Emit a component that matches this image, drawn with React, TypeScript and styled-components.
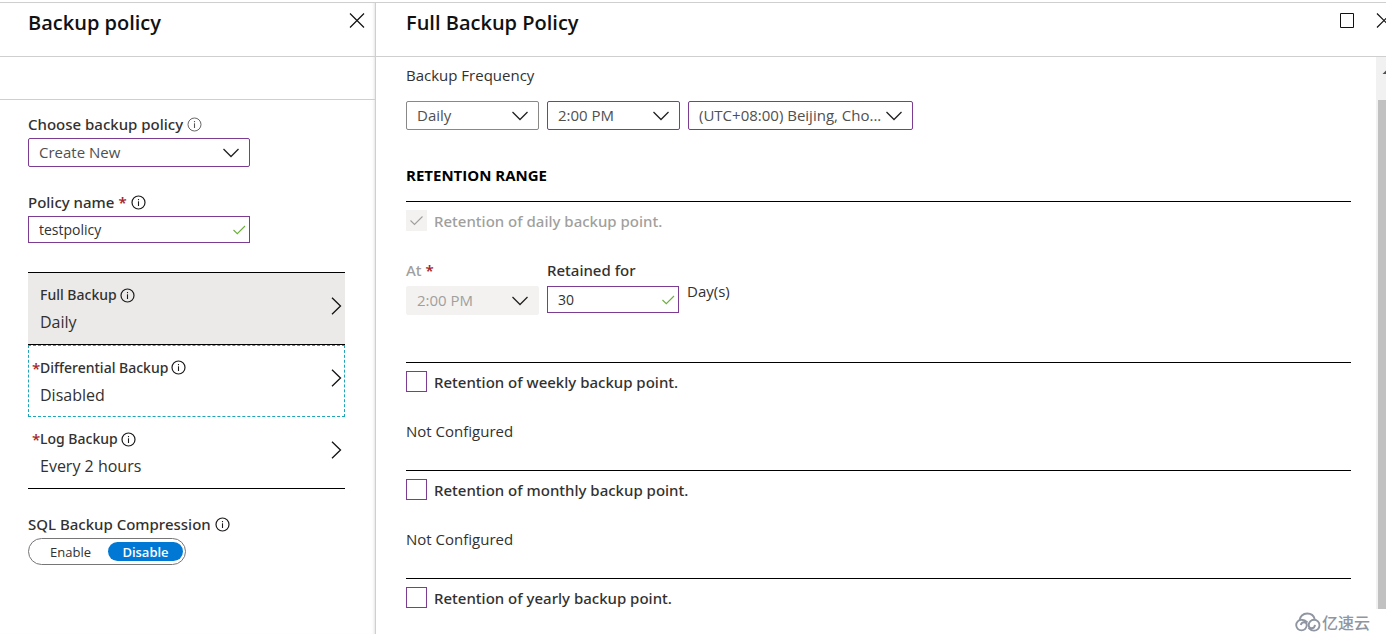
import React, { useId, useState } from 'react';
import styled, { createGlobalStyle, css } from 'styled-components';

const purple = '#7b3c92';
const grey = '#cfcfcf';
const labelFont = "'Noto Sans', 'Open Sans', sans-serif";

const GlobalStyle = createGlobalStyle`
  *, *::before, *::after { box-sizing: border-box; }
  body {
    margin: 0;
    background: #fff;
    color: #323130;
    font-family: 'Open Sans', 'Noto Sans', 'Noto Sans CJK SC', sans-serif;
    font-size: 15px;
    line-height: 20px;
  }
  button, input, select { font: inherit; color: inherit; margin: 0; }
`;

const Page = styled.div`
  position: relative;
  display: flex;
  height: 100vh;
  padding-top: 2px;
  overflow: hidden;
`;

const Blade = styled.section<{ $side?: boolean }>`
  display: flex;
  flex-direction: column;
  min-width: 0;
  border-top: 1px solid ${grey};
  ${({ $side }) =>
    $side
      ? css`
          flex: 0 0 376px;
          border-right: 1px solid ${grey};
          box-shadow: inset -3px 0 3px -2px #e4e4e4;
        `
      : css`
          flex: 1;
        `}
`;

const Header = styled.header<{ $wide?: boolean }>`
  display: flex;
  flex: none;
  justify-content: space-between;
  align-items: flex-start;
  height: 54px;
  padding: ${({ $wide }) => ($wide ? '6px 0 0 30px' : '6px 10px 0 28px')};
  border-bottom: 1px solid ${grey};
  overflow: hidden;
`;

const Title = styled.h1`
  margin: 0;
  color: #111;
  font-size: 20px;
  font-weight: 600;
  line-height: 28px;
`;

const WindowButtons = styled.div`
  display: flex;
  gap: 21px;
  margin-right: -6px;
`;

const IconButton = styled.button`
  display: flex;
  padding: 4px 0;
  border: 0;
  background: none;
`;

const CommandBar = styled.div`
  flex: none;
  height: 43px;
  border-bottom: 1px solid ${grey};
`;

const SideBody = styled.div`
  padding: 14px 30px 0 28px;
`;

const Field = styled.div`
  width: 222px;
  margin-bottom: 25px;
`;

const LabelRow = styled.div`
  display: flex;
  align-items: center;
  gap: 4px;
  height: 20px;
  margin-bottom: 4px;
  font-family: ${labelFont};
  font-weight: 500;
`;

const Star = styled.span`
  color: #a4262c;
  font-weight: 600;
`;

const ControlBox = styled.div<{ $width?: number }>`
  display: grid;
  align-items: center;
  width: ${({ $width }) => ($width ? `${$width}px` : '100%')};
  > * { grid-area: 1 / 1; }
  > svg {
    justify-self: end;
    pointer-events: none;
  }
`;

const SelectInput = styled.select<{ $plain?: boolean }>`
  width: 100%;
  height: 29px;
  padding: 0 30px 1px 10px;
  border: 1px solid ${({ $plain }) => ($plain ? '#8a8886' : purple)};
  border-radius: 2px;
  background: #fff;
  color: #505050;
  appearance: none;
  &:disabled {
    border-color: #f3f2f1;
    background: #f3f2f1;
    color: #a19f9d;
    opacity: 1;
  }
`;

const TextInput = styled.input`
  width: 100%;
  height: 27px;
  padding: 0 28px 1px 10px;
  border: 1px solid ${purple};
  border-radius: 0;
  background: #fff;
  font-size: 14px;
`;

const PolicyList = styled.div`
  display: flex;
  flex-direction: column;
  margin-top: 29px;
  border-top: 1px solid #000;
`;

const PolicyItem = styled.button<{ $selected?: boolean; $focused?: boolean }>`
  display: flex;
  align-items: center;
  justify-content: space-between;
  height: 72px;
  padding: 0 3px 0 4px;
  border: 0;
  border-bottom: 1px solid #000;
  background: ${({ $selected }) => ($selected ? '#ebeae9' : '#fff')};
  text-align: left;
  ${({ $focused }) =>
    $focused &&
    css`
      border: 1px dashed #1fa5b8;
      padding: 0 2px 0 3px;
    `}
`;

const ItemText = styled.span`
  display: grid;
  grid-template-columns: 8px auto;
  row-gap: 7px;
`;

const ItemName = styled.span`
  display: flex;
  grid-column: 2;
  align-items: center;
  gap: 3px;
  font-family: ${labelFont};
  font-size: 14px;
  font-weight: 500;
`;

const ItemStar = styled(Star)`
  grid-area: 1 / 1;
`;

const ItemValue = styled.span`
  grid-column: 2;
  font-size: 16px;
`;

const Compression = styled.fieldset`
  margin: 25px 0 0;
  padding: 0;
  border: 0;
`;

const ToggleTrack = styled.div`
  display: flex;
  width: fit-content;
  height: 27px;
  padding: 3px 2px 3px 4px;
  border: 1px solid #767676;
  border-radius: 14px;
`;

const ToggleOption = styled.label`
  display: flex;
  align-items: center;
  justify-content: center;
  width: 75px;
  height: 19px;
  border-radius: 10px;
  font-size: 13px;
  &:has(input:checked) {
    background: #0078d4;
    color: #fff;
    font-weight: 600;
  }
  input {
    width: 0;
    height: 0;
    appearance: none;
  }
`;

const MainRow = styled.div`
  display: flex;
  flex: 1;
  min-height: 0;
`;

const MainBody = styled.div`
  flex: 1;
  min-width: 0;
  padding: 8px 25px 0 30px;
  overflow: hidden;
`;

const Text = styled.div`
  height: 20px;
`;

const Controls = styled.div`
  display: flex;
  gap: 8px;
`;

const FrequencyControls = styled(Controls)`
  margin-top: 16px;
`;

const SectionTitle = styled.h2`
  margin: 35px 0 16px;
  color: #000;
  font-size: 15px;
  font-weight: 700;
  line-height: 20px;
`;

const Retention = styled.section<{ $tall?: boolean }>`
  height: ${({ $tall }) => ($tall ? 161 : 108)}px;
  padding-top: 8px;
  border-top: 1px solid #000;
`;

const CheckLabel = styled.label<{ $disabled?: boolean }>`
  display: flex;
  align-items: center;
  gap: 7px;
  margin-bottom: 29px;
  color: ${({ $disabled }) => ($disabled ? '#a19f9d' : 'inherit')};
  font-family: ${labelFont};
  font-weight: 500;
`;

const CheckBox = styled.input`
  width: 21px;
  height: 21px;
  border: 1px solid ${purple};
  background: #fff;
  appearance: none;
  &:disabled {
    border-color: #f3f2f1;
    background: #f3f2f1;
  }
`;

const Unit = styled.span`
  margin-top: 21px;
`;

const SmallLabel = styled.label<{ $muted?: boolean }>`
  display: block;
  height: 26px;
  font-family: ${labelFont};
  font-weight: 500;
  color: ${({ $muted }) => ($muted ? '#a19f9d' : 'inherit')};
`;

const ScrollBar = styled.div`
  display: flex;
  flex: 0 0 10px;
  flex-direction: column;
  height: 552px;
  max-height: 100%;
  padding: 10px 0 0 2px;
  background: #f1f1f1;
  overflow: hidden;
`;

const Thumb = styled.div`
  flex: 1;
  margin-top: 23px;
  background: #c1c1c1;
`;

const Watermark = styled.div`
  position: absolute;
  right: 16px;
  bottom: 2px;
  display: flex;
  align-items: center;
  gap: 1px;
  color: #8f96a1;
  font-family: 'Noto Sans CJK SC', sans-serif;
  font-size: 16px;
  font-weight: 500;
`;

function InfoIcon({ thin }: { thin?: boolean }) {
  return (
    <svg width="15" height="15" viewBox="0 0 15 15" fill="none" stroke={thin ? '#555' : '#1b1b1b'} aria-hidden="true">
      <circle cx="7.5" cy="7.5" r="6.5" strokeWidth={thin ? 0.9 : 1.2} />
      <path d="M7.5 6.3V11" strokeWidth="1.1" />
      <path d="M7.5 4v1.2" strokeWidth="1.1" />
    </svg>
  );
}

function CloseIcon() {
  return (
    <svg width="16" height="16" viewBox="0 0 16 16" stroke="#111" strokeWidth="1.2" aria-hidden="true">
      <path d="M1 0.500l14 14M15 0.500L1 14.500" />
    </svg>
  );
}

function MaximizeIcon() {
  return (
    <svg width="16" height="16" viewBox="0 0 16 16" fill="none" stroke="#111" aria-hidden="true">
      <path d="M1.500 0.500h13v14h-13z" />
    </svg>
  );
}

function ChevronDown() {
  return (
    <svg width="27" height="10" viewBox="0 0 27 10" fill="none" stroke="#222" strokeWidth="1.3" aria-hidden="true">
      <path d="M0.500 1L8 8.500L15.500 1" />
    </svg>
  );
}

function ChevronRight() {
  return (
    <svg width="11" height="24" viewBox="0 0 11 24" fill="none" stroke="#111" strokeWidth="1.3" aria-hidden="true">
      <path d="M1 0.700L9.500 9L1 17.300" />
    </svg>
  );
}

function ValidTick() {
  return (
    <svg width="17" height="10" viewBox="0 0 17 10" fill="none" stroke="#6bb03a" strokeWidth="1.1" aria-hidden="true">
      <path d="M0.500 5L4.300 8.700L12 1" />
    </svg>
  );
}

function DisabledTick() {
  return (
    <svg width="17" height="10" viewBox="0 0 17 10" fill="none" stroke="#a19f9d" strokeWidth="1.1" aria-hidden="true">
      <path d="M0.500 4.500L4.500 8.500L12.500 0.500" />
    </svg>
  );
}

function CloudLogo() {
  return (
    <svg width="26" height="20" viewBox="0 0 26 20" fill="none" stroke="#8f96a1" strokeWidth="1.9" aria-hidden="true">
      <path d="M4.500 8.500C4.800 4.500 8 1.500 12.200 1.500c3.800 0 6.600 2.200 7.500 5.500" />
      <path d="M12.500 10.500C10.500 8.500 9 7.800 6.500 7.800a5.300 5.300 0 1 0 5.300 5.300c0-1.700-1.200-2.900-2.800-2.900s-2.800 1-3.200 2.800" />
      <path d="M13.500 16c1.500 1.800 3.200 2.600 5.500 2.600a5.400 5.400 0 1 0-5.300-5.300c0 1.900 1.300 3 2.900 3 2 0 3.200-1.500 3.400-3.400" />
    </svg>
  );
}

function Dropdown(props: { id?: string; label?: string; options: string[]; width?: number; plain?: boolean; disabled?: boolean }) {
  const { id, label, options, width, plain, disabled } = props;
  return (
    <ControlBox $width={width}>
      <SelectInput id={id} aria-label={label} $plain={plain} disabled={disabled}>
        {options.map((option) => (
          <option key={option}>{option}</option>
        ))}
      </SelectInput>
      <ChevronDown />
    </ControlBox>
  );
}

function ValidatedInput({ id, value, width }: { id: string; value: string; width?: number }) {
  return (
    <ControlBox $width={width}>
      <TextInput id={id} type="text" defaultValue={value} />
      <ValidTick />
    </ControlBox>
  );
}

function PolicyRow(props: { name: string; value: string; required?: boolean; selected?: boolean; focused?: boolean }) {
  const { name, value, required, selected, focused } = props;
  return (
    <PolicyItem type="button" $selected={selected} $focused={focused}>
      <ItemText>
        {required && <ItemStar>*</ItemStar>}
        <ItemName>
          {name}
          <InfoIcon />
        </ItemName>
        <ItemValue>{value}</ItemValue>
      </ItemText>
      <ChevronRight />
    </PolicyItem>
  );
}

function RetentionOption({ period, status }: { period: string; status?: string }) {
  const id = useId();
  return (
    <Retention>
      <CheckLabel htmlFor={id}>
        <CheckBox id={id} type="checkbox" />
        Retention of {period} backup point.
      </CheckLabel>
      {status && <Text>{status}</Text>}
    </Retention>
  );
}

export default function App() {
  const [compression, setCompression] = useState('Disable');
  return (
    <>
      <GlobalStyle />
      <Page>
        <Blade $side>
          <Header>
            <Title>Backup policy</Title>
            <IconButton type="button" aria-label="Close backup policy">
              <CloseIcon />
            </IconButton>
          </Header>
          <CommandBar />
          <SideBody>
            <Field>
              <LabelRow>
                <label htmlFor="policy">Choose backup policy</label>
                <InfoIcon thin />
              </LabelRow>
              <Dropdown id="policy" options={['Create New']} />
            </Field>
            <Field>
              <LabelRow>
                <label htmlFor="name">Policy name</label>
                <Star>*</Star>
                <InfoIcon />
              </LabelRow>
              <ValidatedInput id="name" value="testpolicy" />
            </Field>
            <PolicyList>
              <PolicyRow name="Full Backup" value="Daily" selected />
              <PolicyRow name="Differential Backup" value="Disabled" required focused />
              <PolicyRow name="Log Backup" value="Every 2 hours" required />
            </PolicyList>
            <Compression aria-labelledby="compression">
              <LabelRow>
                <span id="compression">SQL Backup Compression</span>
                <InfoIcon />
              </LabelRow>
              <ToggleTrack>
                {['Enable', 'Disable'].map((option) => (
                  <ToggleOption key={option}>
                    <input
                      type="radio"
                      name="compression"
                      checked={compression === option}
                      onChange={() => setCompression(option)}
                    />
                    {option}
                  </ToggleOption>
                ))}
              </ToggleTrack>
            </Compression>
          </SideBody>
        </Blade>
        <Blade>
          <Header $wide>
            <Title>Full Backup Policy</Title>
            <WindowButtons>
              <IconButton type="button" aria-label="Maximize">
                <MaximizeIcon />
              </IconButton>
              <IconButton type="button" aria-label="Close full backup policy">
                <CloseIcon />
              </IconButton>
            </WindowButtons>
          </Header>
          <MainRow>
            <MainBody>
              <Text>Backup Frequency</Text>
              <FrequencyControls>
                <Dropdown label="Frequency" options={['Daily']} width={133} plain />
                <Dropdown label="Time" options={['2:00 PM']} width={133} />
                <Dropdown label="Time zone" options={['(UTC+08:00) Beijing, Cho...']} width={225} />
              </FrequencyControls>
              <SectionTitle>RETENTION RANGE</SectionTitle>
              <Retention $tall>
                <CheckLabel $disabled>
                  <ControlBox $width={21}>
                    <CheckBox type="checkbox" defaultChecked disabled />
                    <DisabledTick />
                  </ControlBox>
                  Retention of daily backup point.
                </CheckLabel>
                <Controls>
                  <div>
                    <SmallLabel htmlFor="at" $muted>
                      At <Star>*</Star>
                    </SmallLabel>
                    <Dropdown id="at" options={['2:00 PM']} width={133} disabled />
                  </div>
                  <div>
                    <SmallLabel htmlFor="retained">Retained for</SmallLabel>
                    <ValidatedInput id="retained" value="30" width={132} />
                  </div>
                  <Unit>Day(s)</Unit>
                </Controls>
              </Retention>
              <RetentionOption period="weekly" status="Not Configured" />
              <RetentionOption period="monthly" status="Not Configured" />
              <RetentionOption period="yearly" />
            </MainBody>
            <ScrollBar aria-hidden="true">
              <svg width="8" height="10" viewBox="0 0 8 10">
                <path d="M4.500 7L9 2.500L13.500 7z" fill="#505050" />
              </svg>
              <Thumb />
            </ScrollBar>
          </MainRow>
        </Blade>
        <Watermark>
          <CloudLogo />
          亿速云
        </Watermark>
      </Page>
    </>
  );
}
